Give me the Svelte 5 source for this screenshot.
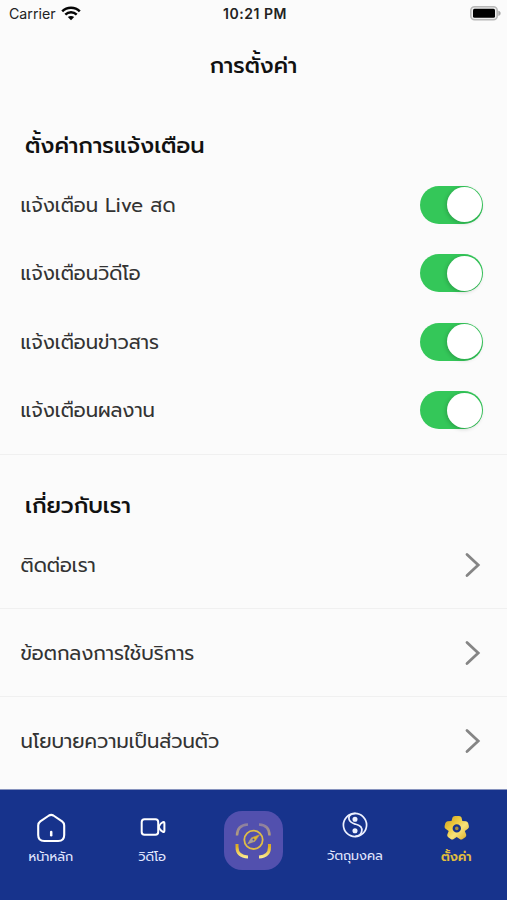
<script>
    let toggles = $state([
        { label: "แจ้งเตือน Live สด", on: true },
        { label: "แจ้งเตือนวิดีโอ", on: true },
        { label: "แจ้งเตือนข่าวสาร", on: true },
        { label: "แจ้งเตือนผลงาน", on: true },
    ]);

    const links = ["ติดต่อเรา", "ข้อตกลงการใช้บริการ", "นโยบายความเป็นส่วนตัว"];
</script>

<div class="screen">
    <div class="status">
        <div class="carrier">
            <span>Carrier</span>
            <svg width="20" height="15" viewBox="0 0 20 15" fill="none" stroke="#050505" stroke-width="2.5">
                <path d="M1.200 5.300C6 .5 14 .5 18.800 5.300M4.300 8.600c3.200-3 8.200-3 11.400 0" />
                <path d="M6.800 11.100c1.800-1.500 4.600-1.500 6.400 0L10 14.300z" fill="#050505" stroke="none" />
            </svg>
        </div>
        <span class="time">10:21 PM</span>
        <svg class="battery" width="31" height="15" viewBox="0 0 31 15">
            <rect x=".8" y=".8" width="26.400" height="13" rx="3.800" fill="#eee" stroke="#b8b8b8" stroke-width="1.600" />
            <rect x="3" y="2.800" width="22" height="9" rx="1.500" />
            <path d="M28.600 5c2.300.6 2.300 4 0 4.600z" fill="#aaa" stroke="#aaa" stroke-width=".6" />
        </svg>
    </div>

    <h1>การตั้งค่า</h1>

    <section class="notify">
        <h2>ตั้งค่าการแจ้งเตือน</h2>
        {#each toggles as item}
            <div class="row">
                <span>{item.label}</span>
                <button
                    class="switch"
                    class:on={item.on}
                    aria-label={item.label}
                    onclick={() => (item.on = !item.on)}
                >
                    <span class="knob"></span>
                </button>
            </div>
        {/each}
    </section>

    <section class="about">
        <h2>เกี่ยวกับเรา</h2>
        {#each links as label}
            <div class="row link">
                <span>{label}</span>
                <svg width="16" height="26" viewBox="0 0 16 26">
                    <path d="M2 2.500 13.200 13 2 23.500" fill="none" stroke="#858585" stroke-width="2.800" stroke-linecap="round" />
                </svg>
            </div>
        {/each}
    </section>

    <nav>
        <div class="tab home">
            <svg width="30" height="30" viewBox="0 0 30 30" fill="none" stroke="#fff" stroke-width="2.100" stroke-linecap="round" stroke-linejoin="round">
                <path d="M13 2.500 4.300 8.400Q2.200 10 2.200 12.500V22q0 6 6 6h14q6 0 6-6v-9.500q0-2.500-2.100-4.100L17.400 2.500q-2.200-1.300-4.400 0z" />
                <path d="M15.200 19v3.200" stroke-width="2.500" />
            </svg>
            <span>หน้าหลัก</span>
        </div>
        <div class="tab video">
            <svg width="28" height="30" viewBox="0 0 28 30" fill="none" stroke="#fff" stroke-width="2" stroke-linejoin="round">
                <rect x="3.700" y="6.200" width="16.500" height="15.500" rx="2.800" />
                <path d="M20.700 14c1-2.600 2.800-4.200 4.200-4.800q1.500-.5 1.500 1v7.600q0 1.500-1.500 1c-1.400-.6-3.200-2.200-4.200-4.800z" />
            </svg>
            <span>วิดีโอ</span>
        </div>
        <div class="tab scan">
            <div class="tile">
                <svg width="36" height="36" viewBox="0 0 36 36" fill="none" stroke="url(#gold)">
                    <defs>
                        <linearGradient id="gold" gradientUnits="userSpaceOnUse" x1="0" y1="0" x2="0" y2="36">
                            <stop offset=".05" stop-color="#8d80a0" />
                            <stop offset=".35" stop-color="#b7a079" />
                            <stop offset=".64" stop-color="#e0ad1c" />
                            <stop offset="1" stop-color="#fff2a0" />
                        </linearGradient>
                    </defs>
                    <path d="M2 12.500q0-10.500 11-11M24 1.500q10.500.5 10.500 11" stroke-width="2.400" />
                    <path d="M2 21v3q0 9.500 11 10M24 34q10.500-.5 10.500-10v-3" stroke-width="3" />
                    <circle cx="18.500" cy="16.800" r="9.200" stroke="#dfbd46" stroke-width="1.800" />
                    <path d="m12.800 20.800 3.700-6 8-3-4.500 6.500z" fill="#e2b92d" stroke="#b99a55" stroke-width=".7" />
                    <path d="m12.800 20.800 3.700-6 3.500 3.500z" fill="#a7a19f" stroke="none" />
                    <circle cx="18.500" cy="16.500" r="1" fill="#4d4b9e" stroke="none" />
                </svg>
            </div>
        </div>
        <div class="tab amulet">
            <svg width="28" height="30" viewBox="0 0 28 30" fill="none" stroke="#edf1ff" stroke-width="1.700">
                <circle cx="14" cy="15" r="11.600" />
                <path d="M14.500 3.400c-6 .2-7 3.200-6.500 5.800.8 3.800 4.200 4.300 7 5.100 4.300 1.100 6.300 3.500 5.800 6.700-.5 3-3.300 5.300-6.500 5.400" />
                <circle cx="14" cy="9.200" r="1.700" fill="#edf1ff" />
                <circle cx="14" cy="20.800" r="1.700" fill="#edf1ff" />
            </svg>
            <span>วัตถุมงคล</span>
        </div>
        <div class="tab settings">
            <svg width="28" height="30" viewBox="0 0 28 30">
                <defs>
                    <linearGradient id="flower" x1="0" y1="0" x2="1" y2="1">
                        <stop offset="0" stop-color="#c99b23" />
                        <stop offset=".35" stop-color="#edc83b" />
                        <stop offset=".6" stop-color="#f8e37a" />
                        <stop offset="1" stop-color="#d8a51c" />
                    </linearGradient>
                </defs>
                <path
                    d="M10.500 4.500Q11 3 13 3h4q2 0 2.500 1.500l.8 3.500 3.700.2q1.800.3 2.200 2l.7 2.800q.4 1.700-1 2.700L22.800 18l1.400 3.600q.4 1.600-.9 2.600l-2.600 1.900q-1.500 1-3 0l-3-2-3 2q-1.500 1-3 0l-2.500-1.900q-1.400-1-.9-2.600L6.700 18l-3.200-2.300q-1.300-1-.9-2.700l.7-2.800q.5-1.700 2.200-2L9.500 8z"
                    fill="url(#flower)"
                />
                <circle cx="14.800" cy="15.400" r="3" fill="#a98e3e" stroke="#17338c" stroke-width="2.400" />
            </svg>
            <span>ตั้งค่า</span>
        </div>
    </nav>
</div>

<style>
    :global(body) {
        margin: 0;
    }

    .screen {
        width: 507px;
        height: 900px;
        display: flex;
        flex-direction: column;
        background: #fbfbfb;
        color: #333;
        font-family: "Prompt", "Noto Sans Thai", "Noto Sans", sans-serif;
        overflow: hidden;
        white-space: nowrap;
    }

    .status {
        height: 27px;
        box-sizing: border-box;
        padding: 0 6px 0 9px;
        display: grid;
        grid-template-columns: 1fr auto 1fr;
        align-items: center;
        color: #222;
        font-family: Inter, sans-serif;
        font-size: 14.2px;
    }

    .carrier {
        display: flex;
        align-items: center;
        gap: 5px;
    }

    .time {
        font-weight: 600;
        font-size: 14px;
        letter-spacing: 0.55px;
    }

    .battery {
        justify-self: end;
    }

    h1,
    h2 {
        margin: 0;
        color: #111;
        font-size: 22.4px;
        font-weight: 500;
        line-height: 40px;
    }

    h1 {
        height: 75px;
        line-height: 77px;
        font-size: 22px;
        text-align: center;
    }

    h2 {
        padding-left: 25px;
        height: 40px;
    }

    .notify {
        height: 353px;
        box-sizing: border-box;
        padding-top: 24px;
        border-bottom: 1px solid #f0f0f0;
    }

    .row {
        height: 68.5px;
        padding: 0 24px 0 20.5px;
        display: flex;
        align-items: center;
        justify-content: space-between;
        font-size: 19.5px;
    }

    .row span {
        padding-top: 1px;
    }

    .notify h2 {
        margin-bottom: 4.5px;
    }

    .about {
        height: 334px;
        box-sizing: border-box;
        padding-top: 31px;
    }

    .link {
        height: 88px;
        box-sizing: border-box;
        padding-right: 26px;
        border-bottom: 1px solid #f0f0f0;
    }

    .about h2 {
        margin-bottom: -5px;
    }

    .link:last-child {
        border-bottom: none;
    }

    .switch {
        width: 63px;
        height: 38px;
        padding: 1.5px;
        border: none;
        border-radius: 19px;
        background: #ddd;
        display: flex;
        flex: none;
        cursor: pointer;
    }

    .switch.on {
        background: #34c759;
        justify-content: flex-end;
    }

    .switch .knob {
        width: 35px;
        height: 35px;
        padding: 0;
        border-radius: 50%;
        background: #fff;
        box-shadow: -1px 1px 4px rgba(0, 0, 0, 0.2);
    }

    nav {
        flex: 1;
        display: grid;
        grid-template-columns: repeat(5, 1fr);
        background: #17338c;
        color: #e3e8ff;
        border-top: 1px solid #8793be;
        font-size: 12.7px;
    }

    .tab {
        display: flex;
        flex-direction: column;
        align-items: center;
        padding-top: 22.5px;
        line-height: 28px;
    }

    .scan {
        padding-top: 21px;
    }

    .tile {
        width: 59px;
        height: 59px;
        border-radius: 18px;
        background: #5250ae;
        display: flex;
        align-items: center;
        justify-content: center;
    }

    .amulet {
        padding-top: 20px;
    }

    .amulet span {
        margin-top: 2px;
    }

    .settings {
        color: #e1bd3e;
        font-weight: 600;
    }
</style>
